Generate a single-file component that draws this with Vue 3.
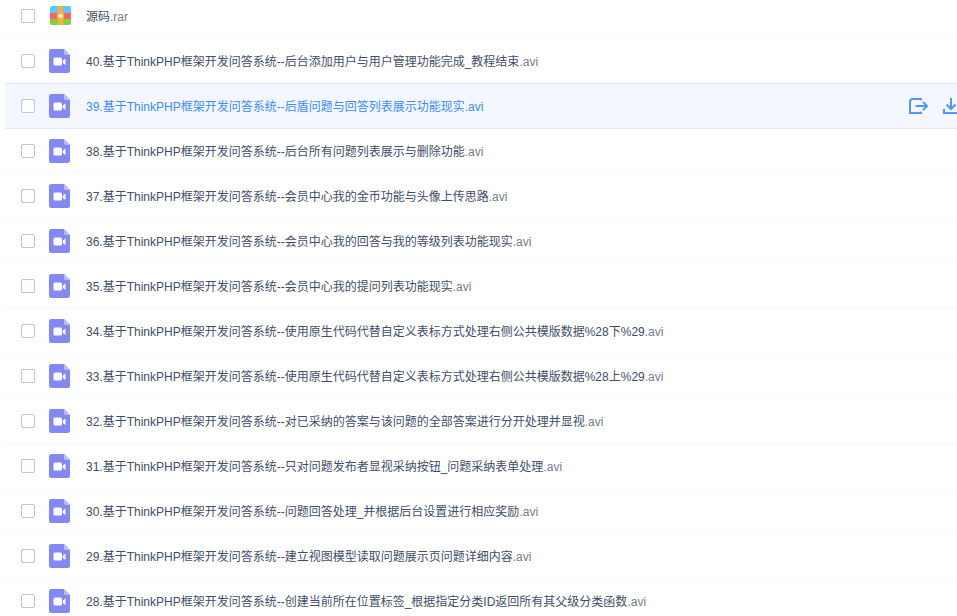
<script setup>
const rows = [
  { name: '源码', ext: '.rar', type: 'rar' },
  { name: '40.基于ThinkPHP框架开发问答系统--后台添加用户与用户管理功能完成_教程结束', ext: '.avi' },
  { name: '39.基于ThinkPHP框架开发问答系统--后盾问题与回答列表展示功能现实', ext: '.avi', active: true },
  { name: '38.基于ThinkPHP框架开发问答系统--后台所有问题列表展示与删除功能', ext: '.avi' },
  { name: '37.基于ThinkPHP框架开发问答系统--会员中心我的金币功能与头像上传思路', ext: '.avi' },
  { name: '36.基于ThinkPHP框架开发问答系统--会员中心我的回答与我的等级列表功能现实', ext: '.avi' },
  { name: '35.基于ThinkPHP框架开发问答系统--会员中心我的提问列表功能现实', ext: '.avi' },
  { name: '34.基于ThinkPHP框架开发问答系统--使用原生代码代替自定义表标方式处理右侧公共模版数据%28下%29', ext: '.avi' },
  { name: '33.基于ThinkPHP框架开发问答系统--使用原生代码代替自定义表标方式处理右侧公共模版数据%28上%29', ext: '.avi' },
  { name: '32.基于ThinkPHP框架开发问答系统--对已采纳的答案与该问题的全部答案进行分开处理并显视', ext: '.avi' },
  { name: '31.基于ThinkPHP框架开发问答系统--只对问题发布者显视采纳按钮_问题采纳表单处理', ext: '.avi' },
  { name: '30.基于ThinkPHP框架开发问答系统--问题回答处理_并根据后台设置进行相应奖励', ext: '.avi' },
  { name: '29.基于ThinkPHP框架开发问答系统--建立视图模型读取问题展示页问题详细内容', ext: '.avi' },
  { name: '28.基于ThinkPHP框架开发问答系统--创建当前所在位置标签_根据指定分类ID返回所有其父级分类函数', ext: '.avi' },
]
</script>

<template>
  <div class="page">
    <ul class="list">
      <li v-for="row in rows" :key="row.name" class="row" :class="{ active: row.active }">
        <span class="check"></span>
        <svg v-if="row.type === 'rar'" class="icon rar" viewBox="0 0 21 19" width="21" height="19">
          <path d="M2 0h17a2 2 0 0 1 2 2v5H0V2a2 2 0 0 1 2-2z" fill="#5ac8fa" />
          <rect x="0" y="7" width="21" height="6" fill="#fc6464" />
          <path d="M0 13h21v4a2 2 0 0 1-2 2H2a2 2 0 0 1-2-2z" fill="#84d146" />
          <rect x="8" y="0" width="5" height="19" fill="#fbb03b" />
          <rect x="7" y="7" width="7" height="6" fill="#fbb03b" />
          <rect x="8.500" y="8.500" width="4" height="3" fill="#fff" />
        </svg>
        <svg v-else class="icon" viewBox="0 0 21 24" width="21" height="24">
          <path d="M2.500 0H15l6 6v15.500a2.500 2.500 0 0 1-2.500 2.500h-16A2.500 2.500 0 0 1 0 21.500v-19A2.500 2.500 0 0 1 2.500 0z" fill="#8488f5" />
          <path d="M15 0l6 6h-4.500A1.500 1.500 0 0 1 15 4.500z" fill="#b9bcfa" />
          <rect x="4.500" y="8.500" width="8.500" height="8" rx="1.500" fill="#fff" />
          <path d="M13.800 11.500l2.700-2v6.500l-2.700-2z" fill="#fff" />
        </svg>
        <span class="name">{{ row.name }}<span class="ext">{{ row.ext }}</span></span>
        <span v-if="row.active" class="actions">
          <svg viewBox="0 0 20 18" width="20" height="18" fill="none" stroke="#4d97ff" stroke-width="2">
            <path d="M12 2.500V2H4a3 3 0 0 0-3 3v11h11v-.5" stroke-linecap="round" />
            <path d="M6.500 9H18M14 5l4 4-4 4" />
          </svg>
          <svg viewBox="0 0 16 16" width="16" height="16" fill="none" stroke="#4d97ff" stroke-width="2">
            <path d="M8 0v10.500M3.500 6.500L8 11l4.500-4.500M1 11v4h14v-4" />
          </svg>
        </span>
      </li>
    </ul>
  </div>
</template>

<style>
html, body { margin: 0; background: #fff; overflow: hidden; }
</style>

<style scoped>
.page {
  width: 957px;
  height: 616px;
  overflow: hidden;
  font-family: "Liberation Sans", "Noto Sans CJK SC", sans-serif;
  font-size: 12px;
  color: #424e67;
}
.list {
  list-style: none;
  margin: -6px 0 0;
  padding: 0 0 0 5px;
}
.row {
  height: 44px;
  border-bottom: 1px solid #f4fbff;
  display: flex;
  align-items: center;
  white-space: nowrap;
}
.active {
  background: #f4f8fe;
  color: #3b8cff;
  margin-top: -1px;
  border-top: 1px solid #deebfa;
  border-bottom-color: #deebfa;
}
.check {
  width: 12px;
  height: 12px;
  border: 1px solid #bac7d9;
  border-radius: 2px;
  margin-left: 16px;
  flex: none;
  background: #fff;
}
.icon { margin-left: 14px; flex: none; }
.rar { margin-top: -1px; margin-left: 15px; margin-right: -1px; }
.name { margin-left: 16px; position: relative; top: -1px; }
.ext { color: #757d8f; }
.active .ext { color: #3b8cff; }
.actions {
  margin-left: auto;
  display: flex;
  align-items: center;
  gap: 14px;
  margin-right: -2px;
}
</style>
